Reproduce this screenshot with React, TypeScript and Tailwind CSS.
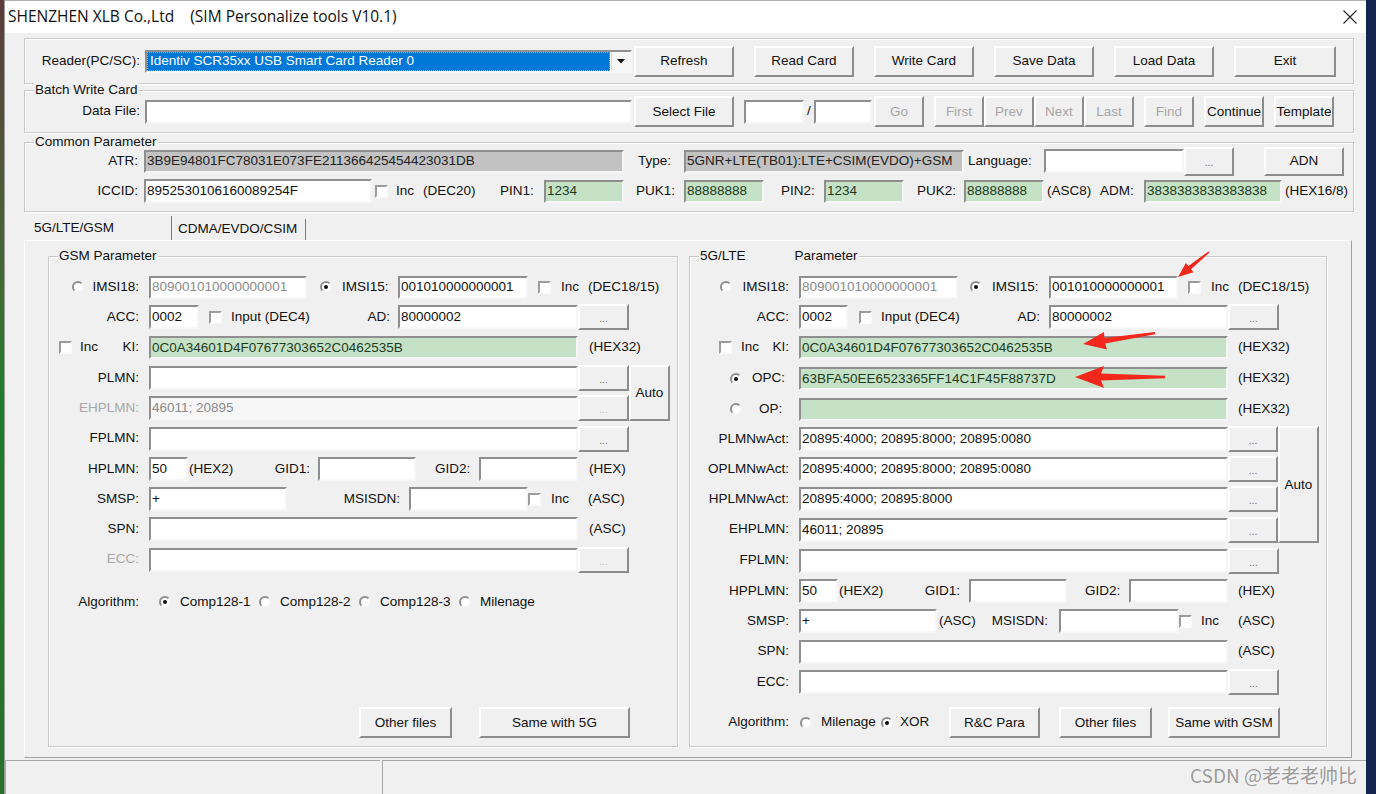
import React from "react";

const FONT = "font-['Liberation_Sans',Arial,sans-serif]";
const SUNKEN =
  "border-2 border-t-[#8f8f8f] border-l-[#8f8f8f] border-r-[#f6f6f6] border-b-[#f6f6f6]";
const RAISED =
  "border-2 border-t-[#ffffff] border-l-[#ffffff] border-r-[#8c8c8c] border-b-[#8c8c8c]";

type FP = { w: string; h?: string; bg?: string; tc?: string; children?: React.ReactNode };
function Field({ w, h = "h-[23px]", bg = "bg-white", tc = "text-[#111]", children }: FP) {
  return (
    <div
      className={`${w} ${h} ${bg} ${tc} ${SUNKEN} shrink-0 flex items-center pl-[1px] overflow-hidden whitespace-nowrap leading-none`}
    >
      {children}
    </div>
  );
}

type BP = { w: string; h?: string; disabled?: boolean; children?: React.ReactNode };
function Btn({ w, h = "h-[31px]", disabled, children }: BP) {
  return (
    <div
      className={`${w} ${h} ${RAISED} bg-[#f0f0f0] shrink-0 flex items-center justify-center whitespace-nowrap leading-none ${
        disabled ? "text-[#a6a6a6]" : "text-[#111]"
      }`}
    >
      {children}
    </div>
  );
}

function Dots({ w = "w-[51px]", h = "h-[26px]", disabled }: { w?: string; h?: string; disabled?: boolean }) {
  return (
    <div
      className={`${w} ${h} ${RAISED} bg-[#f0f0f0] shrink-0 flex items-center justify-center leading-none text-[10px] pt-[4px] ${
        disabled ? "text-[#c4c4c4]" : "text-[#6a6a6a]"
      }`}
    >
      ...
    </div>
  );
}

function Check() {
  return (
    <div className="w-[13px] h-[13px] shrink-0 bg-white border-2 border-t-[#9c9c9c] border-l-[#9c9c9c] border-r-[#fafafa] border-b-[#fafafa]" />
  );
}

function Radio({ on }: { on?: boolean }) {
  return (
    <div className="w-[12px] h-[12px] shrink-0 rounded-full bg-white border-2 border-t-[#8e8e8e] border-l-[#8e8e8e] border-r-[#f4f4f4] border-b-[#f4f4f4] flex items-center justify-center">
      {on && <div className="w-[4px] h-[4px] rounded-full bg-[#111]" />}
    </div>
  );
}

function Lbl({ w, lead, gray, children }: { w: string; lead?: React.ReactNode; gray?: boolean; children?: React.ReactNode }) {
  return (
    <div className={`${w} shrink-0 flex items-center whitespace-nowrap ${gray ? "text-[#a8a8a8]" : ""}`}>
      {lead}
      <span className="ml-auto">{children}</span>
    </div>
  );
}

function Group({ cls, legend, children }: { cls: string; legend?: React.ReactNode; children?: React.ReactNode }) {
  return (
    <div className={`relative shrink-0 border border-[#c9c9c9] shadow-[inset_1px_1px_0_#ffffff,1px_1px_0_#ffffff] ${cls}`}>
      {legend && (
        <div className="absolute left-[9px] -top-[9px] bg-[#f0f0f0] px-[1px] leading-[16px] whitespace-nowrap flex">
          {legend}
        </div>
      )}
      {children}
    </div>
  );
}

const GREEN = "bg-[#c6e2c6]";
const GTXT = "text-[#1d3a1d]";
const GRAYF = "bg-[#c2c2c2]";

function LeftGroup() {
  const L = "w-[100px] pr-[10px]";
  return (
    <Group cls="w-[630px] h-[491px] flex flex-col pt-[15px] pb-[8px]" legend={<span>GSM Parameter</span>}>
      <div className="h-[30px] flex items-center">
        <Lbl w={L} lead={<div className="ml-[23px]"><Radio /></div>}>IMSI18:</Lbl>
        <Field w="w-[158px]" tc="text-[#8a8a8a]">809001010000000001</Field>
        <div className="w-[13px] shrink-0" />
        <Radio on />
        <span className="w-[66px] pl-[10px] shrink-0">IMSI15:</span>
        <Field w="w-[130px]">001010000000001</Field>
        <div className="w-[10px] shrink-0" />
        <Check />
        <span className="w-[37px] pl-[10px] shrink-0">Inc</span>
        <span className="whitespace-nowrap">(DEC18/15)</span>
      </div>
      <div className="h-[30px] flex items-center">
        <Lbl w={L}>ACC:</Lbl>
        <Field w="w-[50px]" h="h-[24px]">0002</Field>
        <div className="w-[10px] shrink-0" />
        <Check />
        <div className="w-[176px] shrink-0 flex justify-between pl-[9px] pr-[8px] whitespace-nowrap">
          <span>Input (DEC4)</span>
          <span>AD:</span>
        </div>
        <Field w="w-[180px]" h="h-[24px]">80000002</Field>
        <Dots />
      </div>
      <div className="h-[31px] flex items-center">
        <Lbl
          w={L}
          lead={
            <div className="ml-[10px] flex items-center">
              <Check />
              <span className="ml-[8px]">Inc</span>
            </div>
          }
        >
          KI:
        </Lbl>
        <Field w="w-[429px]" bg={GREEN} tc={GTXT}>0C0A34601D4F07677303652C0462535B</Field>
        <span className="pl-[11px]">(HEX32)</span>
      </div>
      <div className="flex items-center">
        <div className="flex flex-col">
          <div className="h-[30px] flex items-center">
            <Lbl w={L}>PLMN:</Lbl>
            <Field w="w-[429px]" h="h-[24px]" />
            <Dots />
          </div>
          <div className="h-[30px] flex items-center">
            <Lbl w={L} gray>EHPLMN:</Lbl>
            <Field w="w-[429px]" h="h-[24px]" bg="bg-[#f7f7f7]" tc="text-[#8a8a8a]">46011; 20895</Field>
            <Dots disabled />
          </div>
        </div>
        <Btn w="w-[41px]" h="h-[56px]">Auto</Btn>
      </div>
      <div className="h-[31px] flex items-center">
        <Lbl w={L}>FPLMN:</Lbl>
        <Field w="w-[429px]" h="h-[24px]" />
        <Dots />
      </div>
      <div className="h-[30px] flex items-center">
        <Lbl w={L}>HPLMN:</Lbl>
        <Field w="w-[39px]" h="h-[24px]">50</Field>
        <div className="w-[130px] shrink-0 flex justify-between pl-[1px] pr-[8px] whitespace-nowrap">
          <span>(HEX2)</span>
          <span>GID1:</span>
        </div>
        <Field w="w-[98px]" h="h-[24px]" />
        <span className="w-[63px] pl-[19px] shrink-0">GID2:</span>
        <Field w="w-[99px]" h="h-[24px]" />
        <span className="pl-[11px]">(HEX)</span>
      </div>
      <div className="h-[30px] flex items-center">
        <Lbl w={L}>SMSP:</Lbl>
        <Field w="w-[138px]" h="h-[24px]">+</Field>
        <span className="w-[122px] shrink-0 text-right pr-[9px]">MSISDN:</span>
        <Field w="w-[119px]" h="h-[24px]" />
        <Check />
        <span className="w-[47px] pl-[10px] shrink-0">Inc</span>
        <span>(ASC)</span>
      </div>
      <div className="h-[30px] flex items-center">
        <Lbl w={L}>SPN:</Lbl>
        <Field w="w-[429px]" h="h-[24px]" />
        <span className="pl-[11px]">(ASC)</span>
      </div>
      <div className="h-[31px] flex items-center">
        <Lbl w={L} gray>ECC:</Lbl>
        <Field w="w-[429px]" h="h-[24px]" />
        <Dots disabled />
      </div>
      <div className="mt-[12px] h-[30px] flex items-center">
        <Lbl w={L}>Algorithm:</Lbl>
        <div className="w-[10px] shrink-0" />
        <Radio on />
        <span className="w-[88px] pl-[9px] shrink-0">Comp128-1</span>
        <Radio />
        <span className="w-[88px] pl-[9px] shrink-0">Comp128-2</span>
        <Radio />
        <span className="w-[88px] pl-[9px] shrink-0">Comp128-3</span>
        <Radio />
        <span className="pl-[9px]">Milenage</span>
      </div>
      <div className="mt-auto h-[31px] flex items-center">
        <div className="w-[310px] shrink-0" />
        <Btn w="w-[93px]">Other files</Btn>
        <div className="w-[27px] shrink-0" />
        <Btn w="w-[151px]">Same with 5G</Btn>
      </div>
    </Group>
  );
}

function RightGroup() {
  const L = "w-[109px] pr-[10px]";
  return (
    <Group
      cls="w-[638px] h-[491px] flex flex-col pt-[15px] pb-[8px] ml-[11px]"
      legend={
        <>
          <span>5G/LTE</span>
          <span className="ml-[49px]">Parameter</span>
        </>
      }
    >
      <div className="h-[30px] flex items-center">
        <Lbl w={L} lead={<div className="ml-[30px]"><Radio /></div>}>IMSI18:</Lbl>
        <Field w="w-[159px]" tc="text-[#8a8a8a]">809001010000000001</Field>
        <div className="w-[12px] shrink-0" />
        <Radio on />
        <span className="w-[67px] pl-[10px] shrink-0">IMSI15:</span>
        <Field w="w-[129px]">001010000000001</Field>
        <div className="w-[10px] shrink-0" />
        <Check />
        <span className="w-[37px] pl-[10px] shrink-0">Inc</span>
        <span className="whitespace-nowrap">(DEC18/15)</span>
      </div>
      <div className="h-[30px] flex items-center">
        <Lbl w={L}>ACC:</Lbl>
        <Field w="w-[49px]" h="h-[24px]">0002</Field>
        <div className="w-[11px] shrink-0" />
        <Check />
        <div className="w-[177px] shrink-0 flex justify-between pl-[9px] pr-[9px] whitespace-nowrap">
          <span>Input (DEC4)</span>
          <span>AD:</span>
        </div>
        <Field w="w-[179px]" h="h-[24px]">80000002</Field>
        <Dots />
      </div>
      <div className="h-[31px] flex items-center">
        <Lbl
          w={L}
          lead={
            <div className="ml-[29px] flex items-center">
              <Check />
              <span className="ml-[9px]">Inc</span>
            </div>
          }
        >
          KI:
        </Lbl>
        <Field w="w-[429px]" bg={GREEN} tc={GTXT}>0C0A34601D4F07677303652C0462535B</Field>
        <span className="pl-[10px]">(HEX32)</span>
      </div>
      <div className="h-[31px] flex items-center">
        <div className="w-[109px] shrink-0 flex items-center pl-[40px]">
          <Radio on />
          <span className="ml-[10px]">OPC:</span>
        </div>
        <Field w="w-[429px]" bg={GREEN} tc={GTXT}>63BFA50EE6523365FF14C1F45F88737D</Field>
        <span className="pl-[10px]">(HEX32)</span>
      </div>
      <div className="h-[30px] flex items-center">
        <div className="w-[109px] shrink-0 flex items-center pl-[40px]">
          <Radio />
          <span className="ml-[17px]">OP:</span>
        </div>
        <Field w="w-[429px]" bg={GREEN} tc={GTXT} />
        <span className="pl-[10px]">(HEX32)</span>
      </div>
      <div className="flex items-center">
        <div className="flex flex-col">
          <div className="h-[30px] flex items-center">
            <Lbl w={L}>PLMNwAct:</Lbl>
            <Field w="w-[429px]" h="h-[24px]">20895:4000; 20895:8000; 20895:0080</Field>
            <Dots w="w-[50px]" />
          </div>
          <div className="h-[30px] flex items-center">
            <Lbl w={L}>OPLMNwAct:</Lbl>
            <Field w="w-[429px]" h="h-[24px]">20895:4000; 20895:8000; 20895:0080</Field>
            <Dots w="w-[50px]" />
          </div>
          <div className="h-[30px] flex items-center">
            <Lbl w={L}>HPLMNwAct:</Lbl>
            <Field w="w-[429px]" h="h-[24px]">20895:4000; 20895:8000</Field>
            <Dots w="w-[50px]" />
          </div>
          <div className="h-[31px] flex items-center">
            <Lbl w={L}>EHPLMN:</Lbl>
            <Field w="w-[429px]" h="h-[24px]">46011; 20895</Field>
            <Dots w="w-[50px]" />
          </div>
        </div>
        <Btn w="w-[41px]" h="h-[117px]">Auto</Btn>
      </div>
      <div className="h-[31px] flex items-center">
        <Lbl w={L}>FPLMN:</Lbl>
        <Field w="w-[429px]" h="h-[24px]" />
        <Dots />
      </div>
      <div className="h-[30px] flex items-center">
        <Lbl w={L}>HPPLMN:</Lbl>
        <Field w="w-[39px]" h="h-[24px]">50</Field>
        <div className="w-[131px] shrink-0 flex justify-between pl-[1px] pr-[9px] whitespace-nowrap">
          <span>(HEX2)</span>
          <span>GID1:</span>
        </div>
        <Field w="w-[98px]" h="h-[24px]" />
        <span className="w-[62px] pl-[18px] shrink-0">GID2:</span>
        <Field w="w-[99px]" h="h-[24px]" />
        <span className="pl-[10px]">(HEX)</span>
      </div>
      <div className="h-[30px] flex items-center">
        <Lbl w={L}>SMSP:</Lbl>
        <Field w="w-[138px]" h="h-[24px]">+</Field>
        <div className="w-[122px] shrink-0 flex justify-between pl-[2px] pr-[11px] whitespace-nowrap">
          <span>(ASC)</span>
          <span>MSISDN:</span>
        </div>
        <Field w="w-[120px]" h="h-[24px]" />
        <Check />
        <span className="w-[46px] pl-[9px] shrink-0">Inc</span>
        <span>(ASC)</span>
      </div>
      <div className="h-[31px] flex items-center">
        <Lbl w={L}>SPN:</Lbl>
        <Field w="w-[429px]" h="h-[24px]" />
        <span className="pl-[10px]">(ASC)</span>
      </div>
      <div className="h-[30px] flex items-center">
        <Lbl w={L}>ECC:</Lbl>
        <Field w="w-[429px]" h="h-[24px]" />
        <Dots />
      </div>
      <div className="mt-auto h-[31px] flex items-center">
        <Lbl w={L}>Algorithm:</Lbl>
        <div className="w-[1px] shrink-0" />
        <Radio />
        <span className="w-[69px] pl-[9px] shrink-0">Milenage</span>
        <Radio on />
        <span className="w-[56px] pl-[7px] shrink-0">XOR</span>
        <Btn w="w-[91px]">R&amp;C Para</Btn>
        <div className="w-[19px] shrink-0" />
        <Btn w="w-[93px]">Other files</Btn>
        <div className="w-[16px] shrink-0" />
        <Btn w="w-[112px]">Same with GSM</Btn>
      </div>
    </Group>
  );
}

export default function App() {
  return (
    <div className={`${FONT} w-[1376px] h-[794px] overflow-hidden relative flex bg-[#f0f0f0] text-[13.5px] text-[#111]`}>
      <div className="w-[4px] h-full shrink-0 bg-gradient-to-b from-[#5a3b3b] via-[#1d7d2b] to-[#2a6f2a]" />
      <div className="w-[1362px] h-full shrink-0 flex flex-col border-l border-[#9a9a9a]">
        {/* title bar */}
        <div className="h-[33px] shrink-0 bg-white border-t border-[#b0b0b0] flex items-center">
          <span className="pl-[3px] font-['Open_Sans',sans-serif] text-[15.5px] whitespace-pre text-[#111]">
            SHENZHEN XLB Co.,Ltd    (SIM Personalize tools V10.1)
          </span>
          <svg className="ml-auto mr-[8px]" width="16" height="16" viewBox="0 0 16 16">
            <path d="M1.5 1.5L14.5 14.5M14.5 1.5L1.5 14.5" stroke="#222" strokeWidth="1.1" fill="none" />
          </svg>
        </div>
        {/* body */}
        <div className="flex flex-col pl-[19px]">
          {/* reader group */}
          <Group cls="mt-[5px] h-[46px] w-[1330px] flex items-center">
            <Lbl w="w-[120px] pr-[5px]">Reader(PC/SC):</Lbl>
            <div className={`w-[487px] h-[23px] ${SUNKEN} bg-white flex shrink-0`}>
              <div className="w-[463px] bg-[#0078d7] text-white flex items-center pl-[2px] whitespace-nowrap leading-none border border-dotted border-[#c8a060]">
                Identiv SCR35xx USB Smart Card Reader 0
              </div>
              <div className="ml-auto w-[19px] flex items-center justify-center bg-[#f7f7f7] border-l border-[#d8d8d8]">
                <svg width="8" height="5" viewBox="0 0 8 5">
                  <path d="M0 0H8L4 4.5Z" fill="#111" />
                </svg>
              </div>
            </div>
            <div className="w-[2px] shrink-0" />
            <Btn w="w-[100px]">Refresh</Btn>
            <div className="w-[20px] shrink-0" />
            <Btn w="w-[100px]">Read Card</Btn>
            <div className="w-[20px] shrink-0" />
            <Btn w="w-[100px]">Write Card</Btn>
            <div className="w-[20px] shrink-0" />
            <Btn w="w-[100px]">Save Data</Btn>
            <div className="w-[20px] shrink-0" />
            <Btn w="w-[100px]">Load Data</Btn>
            <div className="w-[20px] shrink-0" />
            <Btn w="w-[102px]">Exit</Btn>
          </Group>
          {/* batch write */}
          <Group cls="mt-[6px] h-[43px] w-[1330px] flex items-center" legend={<span>Batch Write Card</span>}>
            <Lbl w="w-[120px] pr-[5px]">Data File:</Lbl>
            <Field w="w-[487px]" h="h-[24px]" />
            <div className="w-[2px] shrink-0" />
            <Btn w="w-[100px]">Select File</Btn>
            <div className="w-[10px] shrink-0" />
            <Field w="w-[60px]" h="h-[24px]" />
            <span className="w-[10px] shrink-0 text-center">/</span>
            <Field w="w-[58px]" h="h-[24px]" />
            <div className="w-[2px] shrink-0" />
            <Btn w="w-[50px]" disabled>Go</Btn>
            <div className="w-[10px] shrink-0" />
            <Btn w="w-[50px]" disabled>First</Btn>
            <Btn w="w-[50px]" disabled>Prev</Btn>
            <Btn w="w-[50px]" disabled>Next</Btn>
            <Btn w="w-[50px]" disabled>Last</Btn>
            <div className="w-[10px] shrink-0" />
            <Btn w="w-[50px]" disabled>Find</Btn>
            <div className="w-[10px] shrink-0" />
            <Btn w="w-[60px]">Continue</Btn>
            <div className="w-[10px] shrink-0" />
            <Btn w="w-[60px]">Template</Btn>
          </Group>
          {/* common parameter */}
          <Group cls="mt-[9px] h-[70px] w-[1330px] flex flex-col pt-[3px]" legend={<span>Common Parameter</span>}>
            <div className="h-[30px] flex items-center">
              <Lbl w="w-[119px] pr-[6px]">ATR:</Lbl>
              <Field w="w-[480px]" bg={GRAYF} tc="text-[#222]">3B9E94801FC78031E073FE211366425454423031DB</Field>
              <span className="w-[60px] pl-[14px] shrink-0">Type:</span>
              <Field w="w-[280px]" bg={GRAYF} tc="text-[#222]">5GNR+LTE(TB01):LTE+CSIM(EVDO)+GSM</Field>
              <span className="w-[80px] pl-[4px] shrink-0">Language:</span>
              <Field w="w-[140px]" h="h-[24px]" />
              <Dots w="w-[50px]" h="h-[29px]" />
              <div className="w-[30px] shrink-0" />
              <Btn w="w-[80px]" h="h-[29px]">ADN</Btn>
            </div>
            <div className="h-[30px] flex items-center">
              <Lbl w="w-[119px] pr-[6px]">ICCID:</Lbl>
              <Field w="w-[228px]" h="h-[24px]">8952530106160089254F</Field>
              <div className="w-[128px] shrink-0 flex items-center whitespace-nowrap">
                <div className="w-[3px] shrink-0" />
                <Check />
                <span className="ml-[8px]">Inc</span>
                <span className="ml-[9px]">(DEC20)</span>
              </div>
              <span className="w-[44px] shrink-0">PIN1:</span>
              <Field w="w-[80px]" bg={GREEN} tc={GTXT}>1234</Field>
              <span className="w-[60px] pl-[12px] shrink-0">PUK1:</span>
              <Field w="w-[80px]" bg={GREEN} tc={GTXT}>88888888</Field>
              <span className="w-[60px] pl-[17px] shrink-0">PIN2:</span>
              <Field w="w-[80px]" bg={GREEN} tc={GTXT}>1234</Field>
              <span className="w-[60px] pl-[13px] shrink-0">PUK2:</span>
              <Field w="w-[80px]" bg={GREEN} tc={GTXT}>88888888</Field>
              <span className="w-[56px] pl-[3px] shrink-0">(ASC8)</span>
              <span className="w-[44px] shrink-0">ADM:</span>
              <Field w="w-[138px]" bg={GREEN} tc={GTXT}>3838383838383838</Field>
              <span className="pl-[3px] whitespace-nowrap">(HEX16/8)</span>
            </div>
          </Group>
          {/* tabs */}
          <div className="mt-[4px] h-[24px] w-[1330px] flex items-end">
            <div className="w-[148px] h-[24px] flex items-center pl-[10px] border-r border-r-[#7a7a7a]">5G/LTE/GSM</div>
            <div className="w-[134px] h-[21px] flex items-center pl-[6px] border-r border-r-[#7a7a7a]">CDMA/EVDO/CSIM</div>
          </div>
          {/* tab panel */}
          <div className="h-[518px] w-[1328px] flex items-start pt-[15px] pl-[23px] border border-t-[#ffffff] border-l-[#ffffff] border-r-[#a0a0a0] border-b-[#a0a0a0]">
            <LeftGroup />
            <RightGroup />
          </div>
        </div>
        {/* status bar */}
        <div className="mt-[2px] h-[34px] flex">
          <div className="w-[375px] h-full border-t border-l border-[#a8a8a8]" />
          <div className="w-[2px]" />
          <div className="flex-1 h-full border-t border-l border-[#a8a8a8]" />
        </div>
      </div>
      <div className="w-[10px] h-full shrink-0 bg-[#12254d]" />

      {/* watermark */}
      <div className="absolute left-[1190px] top-[762px] text-[19px] leading-[26px] text-[#9a9a9a] whitespace-nowrap font-['Noto_Sans_CJK_SC',sans-serif] [text-shadow:0_0_2px_#ffffff]">
        CSDN @老老老帅比
      </div>

      {/* red annotation arrows */}
      <svg className="absolute left-0 top-0 pointer-events-none" width="1376" height="794" viewBox="0 0 1376 794">
        <polygon
          fill="#f2281d"
          points="1178,277 1193.5,272.3 1191,269.2 1209.5,252.6 1208.5,251.4 1188.4,266 1185.9,262.9"
        />
        <polygon
          fill="#f2281d"
          points="1083,344 1107,349.5 1105.2,343.4 1155.2,334.2 1154.8,332 1104.4,338 1104,332"
        />
        <polygon
          fill="#f2281d"
          points="1075,377 1104,388 1101,380.5 1165,378.2 1165,375.8 1101,373.5 1104,366"
        />
      </svg>
    </div>
  );
}
